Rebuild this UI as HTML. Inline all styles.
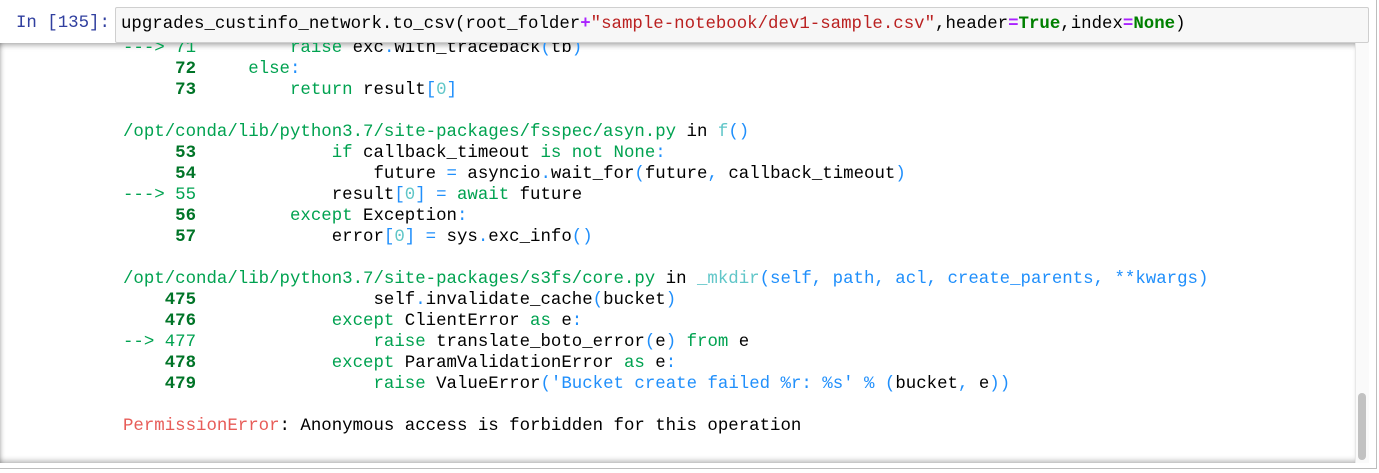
<!DOCTYPE html>
<html><head><meta charset="utf-8"><style>
body{margin:0;width:1379px;height:473px;background:#fff;overflow:hidden;position:relative;font-family:"Liberation Mono",monospace;}
.prompt{position:absolute;left:16px;top:13px;color:#303f9f;font-size:17.4px;line-height:21px}
.inp{position:absolute;left:115px;top:7px;width:1252px;height:34px;background:#f7f7f7;border:1px solid #cfcfcf;border-radius:2px;}
.inp pre{position:absolute;left:5px;top:6px;margin:0}
.out{position:absolute;left:0;top:43px;width:1355px;height:420px;overflow:hidden;box-shadow:inset 0 6px 6px -4px rgba(0,0,0,.35),inset 0 -6px 6px -4px rgba(0,0,0,.3),inset 5px 0 5px -4px rgba(0,0,0,.25)}
pre{font-family:"Liberation Mono",monospace;font-size:17.4px;line-height:21px;margin:0;color:#000}
.out pre{position:absolute;left:123px;top:-5px}
.sb{position:absolute;left:1355px;top:43px;width:13px;height:420px;background:#fafafa;border-left:1px solid #e8e8e8}
.th{position:absolute;left:1358px;top:393px;width:8px;height:67px;background:#c2c2c2;border-radius:4px}
.rb{position:absolute;left:1376px;top:0;width:1px;height:469px;background:#bdbdbd}
.bb{position:absolute;left:0;top:468px;width:1377px;height:1px;background:#bdbdbd}
.g{color:#00a250}.G{color:#007427;font-weight:bold}.b{color:#208ffb}.c{color:#60c6c8}.r{color:#e75c58}
.s{color:#ba2121}.p{color:#aa22ff;font-weight:bold}.k{color:#008000;font-weight:bold}
</style></head><body>
<div class="prompt">In [135]:</div>
<div class="inp"><pre>upgrades_custinfo_network.to_csv(root_folder<span class="p">+</span><span class="s">"sample-notebook/dev1-sample.csv"</span>,header<span class="p">=</span><span class="k">True</span>,index<span class="p">=</span><span class="k">None</span>)</pre></div>
<div class="out"><pre><span class="g">---&gt; 71</span>         <span class="g">raise</span> exc<span class="b">.</span>with_traceback<span class="b">(</span>tb<span class="b">)</span>
<span class="G">     72</span>     <span class="g">else</span><span class="b">:</span>
<span class="G">     73</span>         <span class="g">return</span> result<span class="b">[</span><span class="c">0</span><span class="b">]</span>

<span class="g">/opt/conda/lib/python3.7/site-packages/fsspec/asyn.py</span> in <span class="c">f</span><span class="b">()</span>
<span class="G">     53</span>             <span class="g">if</span> callback_timeout <span class="g">is</span> <span class="g">not</span> <span class="g">None</span><span class="b">:</span>
<span class="G">     54</span>                 future <span class="b">=</span> asyncio<span class="b">.</span>wait_for<span class="b">(</span>future<span class="b">,</span> callback_timeout<span class="b">)</span>
<span class="g">---&gt; 55</span>             result<span class="b">[</span><span class="c">0</span><span class="b">]</span> <span class="b">=</span> <span class="g">await</span> future
<span class="G">     56</span>         <span class="g">except</span> Exception<span class="b">:</span>
<span class="G">     57</span>             error<span class="b">[</span><span class="c">0</span><span class="b">]</span> <span class="b">=</span> sys<span class="b">.</span>exc_info<span class="b">()</span>

<span class="g">/opt/conda/lib/python3.7/site-packages/s3fs/core.py</span> in <span class="c">_mkdir</span><span class="b">(self, path, acl, create_parents, **kwargs)</span>
<span class="G">    475</span>                 self<span class="b">.</span>invalidate_cache<span class="b">(</span>bucket<span class="b">)</span>
<span class="G">    476</span>             <span class="g">except</span> ClientError <span class="g">as</span> e<span class="b">:</span>
<span class="g">--&gt; 477</span>                 <span class="g">raise</span> translate_boto_error<span class="b">(</span>e<span class="b">)</span> <span class="g">from</span> e
<span class="G">    478</span>             <span class="g">except</span> ParamValidationError <span class="g">as</span> e<span class="b">:</span>
<span class="G">    479</span>                 <span class="g">raise</span> ValueError<span class="b">(</span><span class="b">'Bucket create failed %r: %s'</span> <span class="b">%</span> <span class="b">(</span>bucket<span class="b">,</span> e<span class="b">))</span>

<span class="r">PermissionError</span>: Anonymous access is forbidden for this operation</pre></div>
<div class="sb"></div><div class="th"></div>
<div class="rb"></div><div class="bb"></div>
</body></html>
